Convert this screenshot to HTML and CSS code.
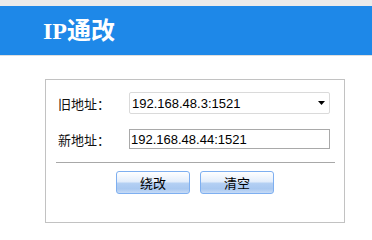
FILE: index.html
```html
<!DOCTYPE html>
<html lang="zh-CN">
<head>
<meta charset="utf-8">
<title>IP通改</title>
<link rel="stylesheet" href="styles.css">
</head>
<body>
<header class="topbar">
  <h1 class="title">IP通改</h1>
</header>
<main class="panel">
  <div class="fields">
    <div class="row">
      <label class="label" for="old">旧地址：</label>
      <span class="select-wrap">
        <select id="old" class="select">
          <option>192.168.48.3:1521</option>
        </select>
        <svg class="arrow" width="7" height="4" viewBox="0 0 7 4"><path d="M0 0H7L3.5 4Z" fill="#000"/></svg>
      </span>
    </div>
    <div class="row row-second">
      <label class="label" for="new">新地址：</label>
      <input id="new" class="input" type="text" value="192.168.48.44:1521">
    </div>
  </div>
  <hr class="sep">
  <div class="actions">
    <button class="btn" type="button">绕改</button>
    <button class="btn" type="button">清空</button>
  </div>
</main>
</body>
</html>
```

FILE: styles.css
```css
html, body {
  margin: 0;
  padding: 0;
  background: #fff;
}
body {
  font-family: "Liberation Sans", "Noto Sans CJK SC", sans-serif;
  font-size: 13px;
  color: #000;
}
.topbar {
  border-top: 6px solid #ebebeb;
  border-bottom: 1px solid #dedede;
  background: #1e88e8;
  height: 49px;
  display: flex;
  align-items: center;
  padding-left: 43px;
}
.title {
  margin: 0;
  font-family: "Liberation Serif", "Noto Sans CJK SC", serif;
  font-weight: bold;
  font-size: 24px;
  line-height: 1;
  color: #fff;
  padding-top: 1px;
}
.panel {
  box-sizing: border-box;
  margin: 23px 0 0 45px;
  width: 300px;
  height: 144px;
  border: 1px solid #c2c2c2;
  padding-top: 12px;
}
.fields {
  padding-left: 12px;
}
.row {
  display: flex;
  align-items: center;
}
.row-second {
  margin-top: 15px;
}
.label {
  width: 71px;
  flex: none;
  font-family: "Noto Sans CJK SC", sans-serif;
  font-size: 13px;
  color: #111;
}
.select-wrap {
  position: relative;
  display: block;
}
.select {
  appearance: none;
  -webkit-appearance: none;
  box-sizing: border-box;
  width: 201px;
  height: 22px;
  margin: 0;
  border: 1px solid #dadada;
  border-radius: 2px;
  background: #fff;
  font-family: "Liberation Sans", sans-serif;
  font-size: 13px;
  color: #000;
  padding: 0 0 0 2px;
  outline: none;
}
.arrow {
  position: absolute;
  right: 5px;
  top: 9px;
}
.input {
  box-sizing: border-box;
  width: 201px;
  height: 20px;
  margin: 0;
  border: 1px solid #a9a9a9;
  background: #fff;
  font-family: "Liberation Sans", sans-serif;
  font-size: 13px;
  color: #000;
  padding: 0 0 0 1px;
  outline: none;
}
.sep {
  margin: 13px 9px 0 10px;
  border: 0;
  border-top: 1px solid #a8a8a8;
  height: 0;
}
.actions {
  display: flex;
  justify-content: center;
  gap: 10px;
  margin-top: 8px;
}
.btn {
  box-sizing: border-box;
  width: 74px;
  height: 23px;
  margin: 0;
  padding: 0;
  border: 1px solid #7eaff0;
  border-radius: 3px;
  background: linear-gradient(to bottom, #ffffff 0%, #e4eefb 45%, #b3cff3 55%, #a9c8f0 80%, #c6dbf6 100%);
  font-family: "Noto Sans CJK SC", sans-serif;
  font-size: 13px;
  color: #000;
  line-height: 1;
}
```
